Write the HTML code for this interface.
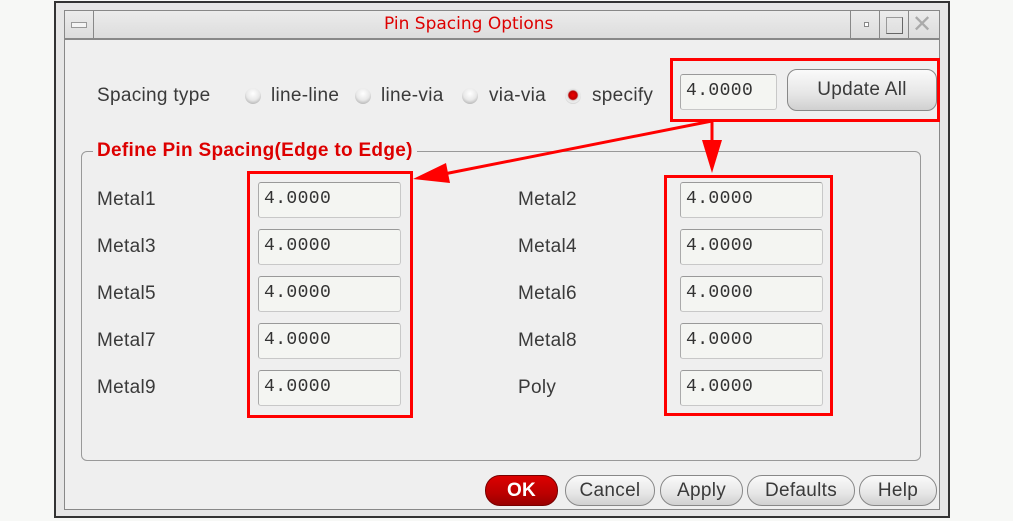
<!DOCTYPE html>
<html><head><meta charset="utf-8"><style>
*{margin:0;padding:0;box-sizing:border-box}
body{width:1013px;height:521px;background:#f7f8f6;position:relative;overflow:hidden;font-family:"Liberation Sans",sans-serif;color:#333}
.a{position:absolute}
.lbl{position:absolute;font-size:19px;letter-spacing:0.3px;color:#3a3a3a;line-height:22px}
.fld{position:absolute;width:143px;height:36px;background:#f4f5f2;border:1px solid #c8c8c8;border-top-color:#999;border-left-color:#aaa;border-radius:3px;font-family:"Liberation Mono",monospace;font-size:18px;letter-spacing:0.4px;padding:6px 0 0 5px;color:#333}
.btn{position:absolute;height:31px;top:475px;border:1px solid #888;border-radius:15px;background:linear-gradient(#fafafa,#e6e6e6 60%,#d0d0d0);font-size:19px;letter-spacing:0.3px;text-align:center;line-height:29px;color:#3a3a3a}
.rb{position:absolute;width:16px;height:16px;border-radius:50%;background:radial-gradient(circle at 50% 35%,#fff,#e8e8e8 50%,#999);}
.red{position:absolute;border:3px solid #f00}
</style></head><body>
<div class="a" style="left:54px;top:1px;width:896px;height:517px;background:#e6e6e6;border:2px solid #333"></div>
<div class="a" style="left:64px;top:10px;width:876px;height:500px;border:1px solid #888;background:#efefef"></div>
<div class="a" style="left:65px;top:11px;width:874px;height:29px;background:linear-gradient(#ececec,#dcdcdc);border-bottom:2px solid #888"></div>
<div class="a" style="left:93px;top:11px;width:1px;height:29px;background:#888"></div>
<div class="a" style="left:71px;top:22px;width:16px;height:6px;border:1px solid #999;background:#f4f4f4"></div>
<div class="a" style="left:384px;top:14px;font-size:17px;color:#d00;font-family:'DejaVu Sans','Liberation Sans',sans-serif">Pin Spacing Options</div>
<div class="a" style="left:850px;top:11px;width:1px;height:29px;background:#888"></div>
<div class="a" style="left:879px;top:11px;width:1px;height:29px;background:#888"></div>
<div class="a" style="left:908px;top:11px;width:1px;height:29px;background:#888"></div>
<div class="a" style="left:864px;top:22px;width:5px;height:5px;border:1px solid #888;background:#fff"></div>
<div class="a" style="left:886px;top:17px;width:17px;height:17px;border:1px solid #999;border-right-color:#666;border-bottom-color:#666"></div>
<div class="a" style="left:912px;top:12px;font-size:24px;color:#aaa;line-height:26px">✕</div>
<div class="a" style="left:65px;top:42px;width:874px;height:467px;background:#efefef"></div>
<div class="lbl" style="left:97px;top:85px">Spacing type</div>
<div class="rb" style="left:245px;top:88px"></div><div class="lbl" style="left:271px;top:85px">line-line</div>
<div class="rb" style="left:355px;top:88px"></div><div class="lbl" style="left:381px;top:85px">line-via</div>
<div class="rb" style="left:462px;top:88px"></div><div class="lbl" style="left:489px;top:85px">via-via</div>
<div class="rb" style="left:565px;top:88px;background:radial-gradient(circle at 50% 45%,#e00 0,#b00 35%,#ddd 45%,#eee 60%,#999)"></div><div class="lbl" style="left:592px;top:85px">specify</div>
<div class="fld" style="left:680px;top:74px;width:97px">4.0000</div>
<div class="btn" style="left:787px;top:69px;width:150px;height:42px;line-height:40px;border-radius:10px">Update All</div>
<div class="red" style="left:670px;top:58px;width:270px;height:64px"></div>
<div class="a" style="left:81px;top:151px;width:840px;height:310px;border:1px solid #999;border-radius:6px"></div>
<div class="a" style="left:93px;top:140px;padding:0 4px;background:#efefef;font-size:19px;letter-spacing:0.3px;font-weight:bold;color:#d00;line-height:22px">Define Pin Spacing(Edge to Edge)</div>
<div class="lbl" style="left:97px;top:189px">Metal1</div><div class="fld" style="left:258px;top:182px">4.0000</div>
<div class="lbl" style="left:97px;top:236px">Metal3</div><div class="fld" style="left:258px;top:229px">4.0000</div>
<div class="lbl" style="left:97px;top:283px">Metal5</div><div class="fld" style="left:258px;top:276px">4.0000</div>
<div class="lbl" style="left:97px;top:330px">Metal7</div><div class="fld" style="left:258px;top:323px">4.0000</div>
<div class="lbl" style="left:97px;top:377px">Metal9</div><div class="fld" style="left:258px;top:370px">4.0000</div>
<div class="lbl" style="left:518px;top:189px">Metal2</div><div class="fld" style="left:680px;top:182px">4.0000</div>
<div class="lbl" style="left:518px;top:236px">Metal4</div><div class="fld" style="left:680px;top:229px">4.0000</div>
<div class="lbl" style="left:518px;top:283px">Metal6</div><div class="fld" style="left:680px;top:276px">4.0000</div>
<div class="lbl" style="left:518px;top:330px">Metal8</div><div class="fld" style="left:680px;top:323px">4.0000</div>
<div class="lbl" style="left:518px;top:377px">Poly</div><div class="fld" style="left:680px;top:370px">4.0000</div>
<div class="red" style="left:247px;top:171px;width:166px;height:247px"></div>
<div class="red" style="left:664px;top:175px;width:169px;height:241px"></div>
<svg class="a" style="left:0;top:0" width="1013" height="521">
<line x1="712" y1="121" x2="444" y2="174" stroke="#f00" stroke-width="3"/>
<polygon points="413,179 446,163 450,183" fill="#f00"/>
<line x1="712" y1="121" x2="712" y2="145" stroke="#f00" stroke-width="3"/>
<polygon points="702,140 722,140 712,173" fill="#f00"/>
</svg>
<div class="btn" style="left:485px;width:73px;background:linear-gradient(#d00,#b00 60%,#900);color:#fff;font-weight:bold;border-color:#700">OK</div>
<div class="btn" style="left:565px;width:90px">Cancel</div>
<div class="btn" style="left:660px;width:83px">Apply</div>
<div class="btn" style="left:747px;width:108px">Defaults</div>
<div class="btn" style="left:859px;width:78px">Help</div>
</body></html>
